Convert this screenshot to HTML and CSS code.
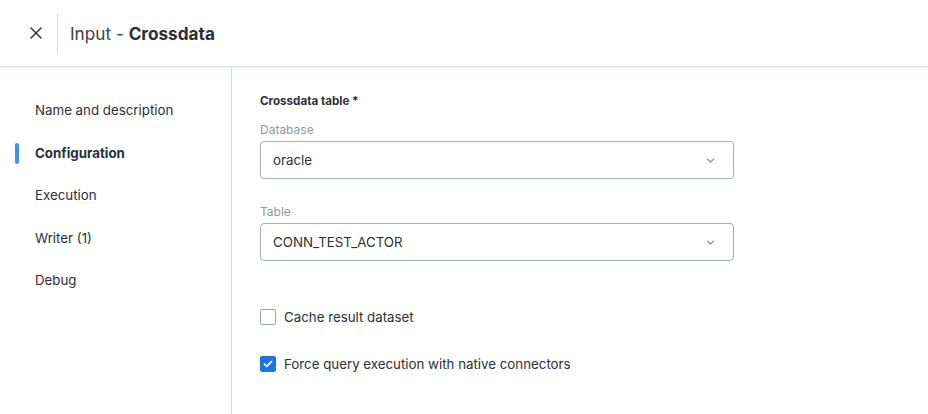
FILE: index.html
```html
<!DOCTYPE html>
<html>
<head>
<meta charset="utf-8">
<link rel="stylesheet" href="styles.css">
</head>
<body>
<div class="app">
  <header class="header">
    <button class="close" aria-label="Close">
      <svg width="12" height="12" viewBox="0 0 12 12"><path d="M1 1L11 11M11 1L1 11" stroke="#2f3542" stroke-width="1.5" stroke-linecap="round"/></svg>
    </button>
    <div class="divider"></div>
    <h1 class="title">Input - <b>Crossdata</b></h1>
  </header>
  <div class="body">
    <nav class="sidebar">
      <div class="nav-item">Name and description</div>
      <div class="nav-item active">Configuration</div>
      <div class="nav-item">Execution</div>
      <div class="nav-item">Writer (1)</div>
      <div class="nav-item">Debug</div>
    </nav>
    <main class="content">
      <div class="section-title">Crossdata table *</div>
      <div class="field">
        <label class="label">Database</label>
        <div class="select"><span>oracle</span>
          <svg class="chev" width="9" height="5" viewBox="0 0 9 5"><path d="M1 0.8L4.5 4L8 0.8" fill="none" stroke="#7a8594" stroke-width="1.1"/></svg>
        </div>
      </div>
      <div class="field">
        <label class="label">Table</label>
        <div class="select"><span>CONN_TEST_ACTOR</span>
          <svg class="chev" width="9" height="5" viewBox="0 0 9 5"><path d="M1 0.8L4.5 4L8 0.8" fill="none" stroke="#7a8594" stroke-width="1.1"/></svg>
        </div>
      </div>
      <div class="checks">
        <div class="check"><span class="box"></span><span>Cache result dataset</span></div>
        <div class="check"><span class="box checked"><svg width="10" height="8" viewBox="0 0 10 8"><path d="M1.5 4.2L3.8 6.4L8.5 1.6" fill="none" stroke="#fff" stroke-width="1.8" stroke-linecap="round" stroke-linejoin="round"/></svg></span><span>Force query execution with native connectors</span></div>
      </div>
    </main>
  </div>
</div>
</body>
</html>
```
FILE: styles.css
```css
* { box-sizing: border-box; }
html, body { margin: 0; padding: 0; background: #fff; }
body {
  font-family: Inter, "Noto Sans", sans-serif;
  color: #2b2f38;
  width: 928px;
  height: 414px;
  overflow: hidden;
}
.header {
  height: 67px;
  border-bottom: 1px solid #d3d9e0;
  display: flex;
  align-items: center;
  padding-left: 23px;
}
.close {
  border: 0;
  background: none;
  width: 26px;
  height: 26px;
  padding: 0;
  display: flex;
  align-items: center;
  justify-content: center;
  margin-right: 8px;
}
.divider {
  width: 1px;
  height: 40px;
  background: #d3d9e0;
  margin-right: 12px;
}
.title {
  margin: 0;
  font-size: 17.2px;
  font-weight: 400;
  color: #3a3f4a;
}
.title b { font-weight: 700; color: #2b2f38; }
.body {
  display: flex;
  height: 347px;
}
.sidebar {
  width: 232px;
  border-right: 1px solid #d3d9e0;
  padding-top: 33px;
  display: flex;
  flex-direction: column;
}
.nav-item {
  position: relative;
  font-size: 13.3px;
  height: 42.5px;
  line-height: 21px;
  padding-left: 35px;
  color: #2b2f38;
}
.nav-item.active { font-weight: 700; }
.nav-item.active::before {
  content: "";
  position: absolute;
  left: 15px;
  top: 0;
  width: 4px;
  height: 21px;
  border-radius: 2px;
  background: #3d93ec;
}
.content {
  flex: 1;
  padding: 25px 0 0 28px;
}
.section-title {
  font-size: 11.6px;
  font-weight: 700;
  line-height: 18px;
  margin-bottom: 12px;
}
.field { width: 474px; margin-bottom: 25px; }
.label {
  display: block;
  font-size: 12px;
  color: #8e98a4;
  line-height: 16px;
  margin-bottom: 3px;
}
.select {
  height: 38px;
  border: 1px solid #a4adb8;
  border-radius: 4px;
  display: flex;
  align-items: center;
  justify-content: space-between;
  padding: 0 18px 0 12px;
  font-size: 13.3px;
  color: #2b2f38;
}
.chev { display: block; }
.checks { padding-top: 23px; display: flex; flex-direction: column; gap: 31px; }
.check {
  display: flex;
  align-items: center;
  gap: 8px;
  font-size: 13.3px;
  line-height: 16px;
}
.box {
  width: 16px;
  height: 16px;
  border: 1px solid #9aa3ad;
  border-radius: 2px;
  display: flex;
  align-items: center;
  justify-content: center;
}
.box.checked { background: #1d74e0; border-color: #1d74e0; }
```
